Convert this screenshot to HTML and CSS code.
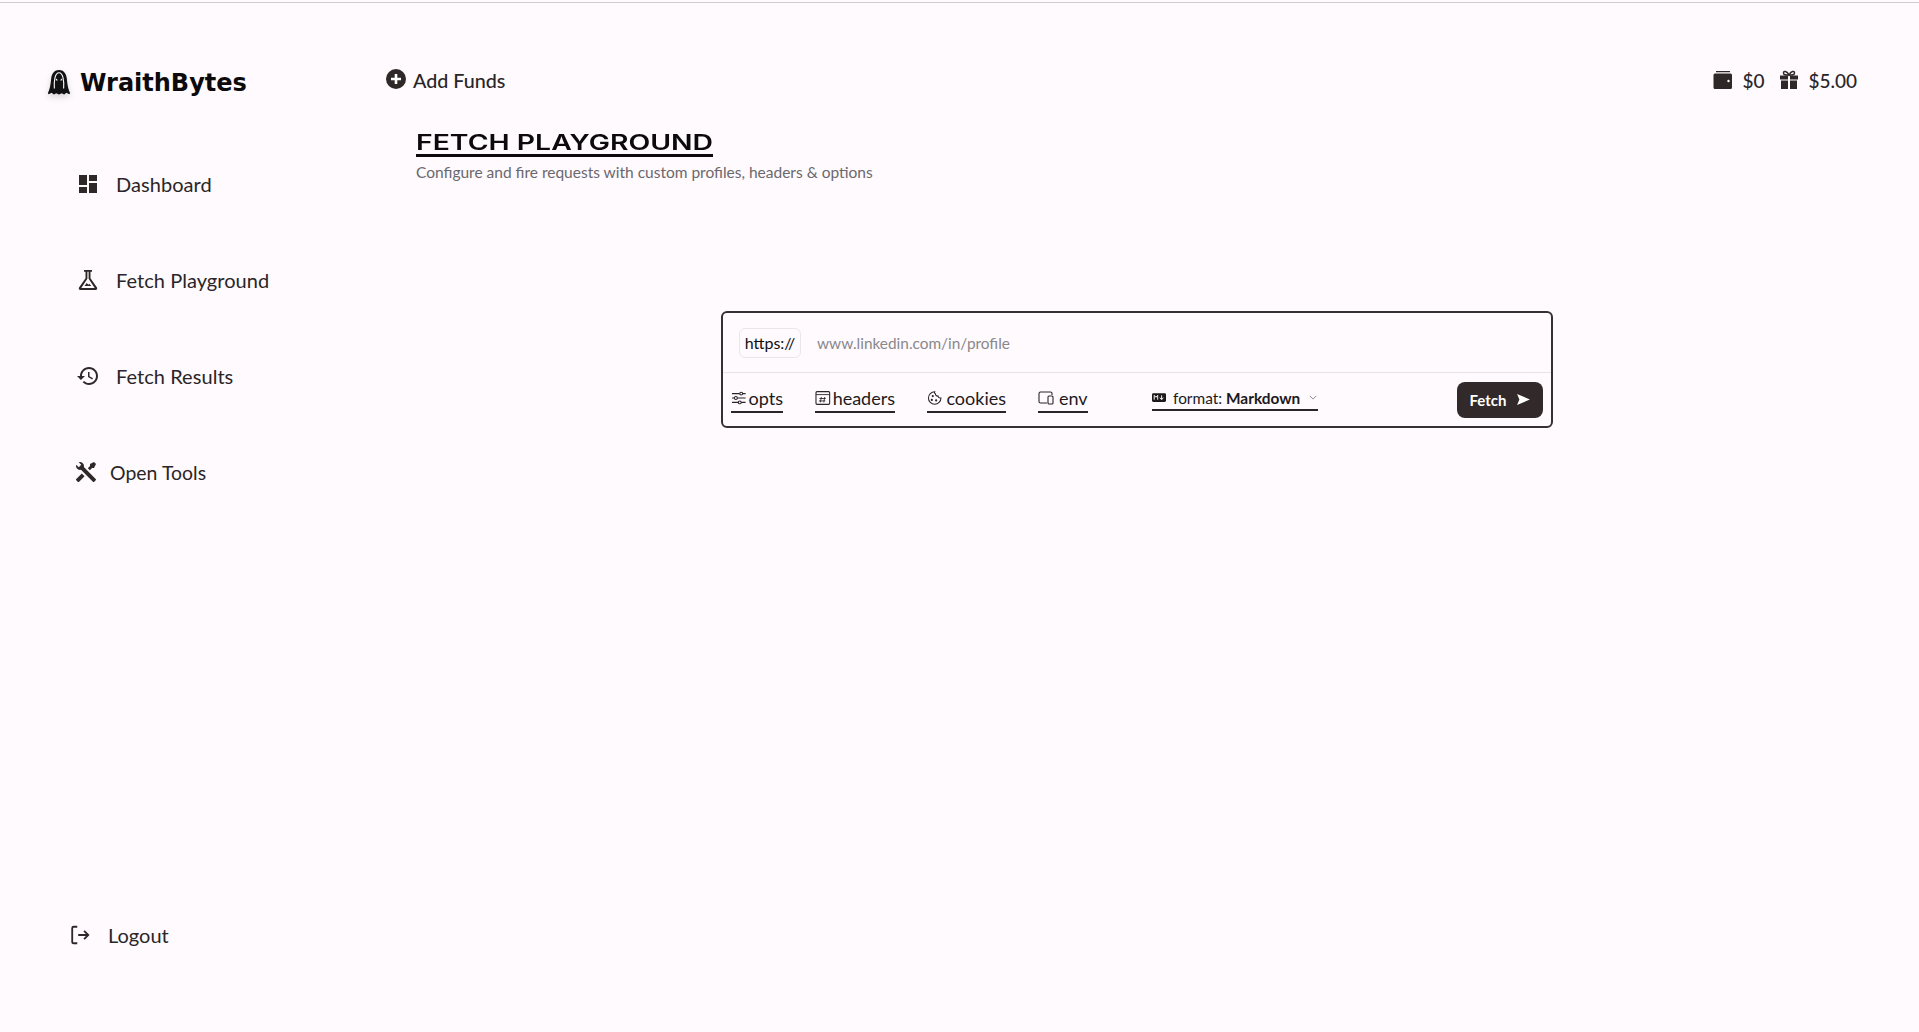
FILE: index.html
```html
<!DOCTYPE html>
<html lang="en">
<head>
    <meta charset="UTF-8">
    <title>Fetch Playground - WraithBytes</title>
    <link rel="stylesheet" href="styles.css">
</head>
<body>
    <div class="topline"></div>
    <div class="app">
        <aside class="sidebar">
            <div class="logo">
                <svg class="logo-icon" viewBox="0 0 24 28" width="24" height="26">
                    <path fill="#111" d="M12 0C6 0 4 5 3.500 10C3 16 2 21 0 25L1 26L4 24.500L6.500 26.500L9 25L12 26.500L15 25L17.500 26.500L20 24.500L23 26L24 25C22 21 21 16 20.500 10C20 5 18 0 12 0Z"/>
                    <path fill="none" stroke="#fefafd" stroke-width="1.200" d="M7 20C6.500 12 7.500 3 12 3C16.500 3 17.500 12 17 20"/>
                    <path fill="#fefafd" d="M8.500 9L11 11L8.800 11.200ZM15.500 9L13 11L15.200 11.200Z"/>
                </svg>
                <span class="logo-text">WraithBytes</span>
            </div>
            <nav class="nav">
                <a class="nav-item">
                    <svg class="nav-icon" viewBox="0 0 24 24"><path d="M3 13h8V3H3v10zm0 8h8v-6H3v6zm10 0h8V11h-8v10zm0-18v6h8V3h-8z"/></svg>
                    <span>Dashboard</span>
                </a>
                <a class="nav-item">
                    <svg class="nav-icon" viewBox="0 0 24 24"><path d="M8 2h8v1.800h-1.500v6.400L21 19.600A1.600 1.600 0 0 1 19.700 22H4.300A1.600 1.600 0 0 1 3 19.600L9.500 10.200V3.800H8zM11.400 3.800v7L5.300 20.100h13.400L12.600 10.800v-7z"/><path d="M8.500 18l2.200-3 1.600 1.800 1-1 2 2.200z"/></svg>
                    <span>Fetch Playground</span>
                </a>
                <a class="nav-item">
                    <svg class="nav-icon" viewBox="0 0 24 24"><path d="M13 3c-4.970 0-9 4.030-9 9H1l3.890 3.890.070.140L9 12H6c0-3.870 3.130-7 7-7s7 3.130 7 7-3.130 7-7 7c-1.930 0-3.680-.790-4.940-2.060l-1.420 1.420C8.270 19.990 10.510 21 13 21c4.970 0 9-4.030 9-9s-4.030-9-9-9zm-1 5v5l4.280 2.540.720-1.210-3.500-2.080V8H12z"/></svg>
                    <span>Fetch Results</span>
                </a>
                <a class="nav-item nav-tools">
                    <svg class="nav-icon" viewBox="0 0 24 24"><path d="M21.710 20.290L20.290 21.710A1 1 0 0 1 18.880 21.710L7 9.850A3.810 3.810 0 0 1 6 10A4 4 0 0 1 2.220 4.700L4.760 7.240L5.290 6.710L6.710 5.290L7.240 4.760L4.700 2.220A4 4 0 0 1 10 6A3.810 3.810 0 0 1 9.850 7L21.710 18.880A1 1 0 0 1 21.710 20.290M2.290 18.880A1 1 0 0 0 2.290 20.290L3.710 21.710A1 1 0 0 0 5.120 21.710L10.590 16.250L7.760 13.410M20 2L16 4V6L13.830 8.170L15.830 10.170L18 8H20L22 4Z"/></svg>
                    <span>Open Tools</span>
                </a>
            </nav>
            <a class="logout">
                <svg class="logout-icon" viewBox="0 0 24 24"><path d="M9 3H5a1.500 1.500 0 0 0-1.500 1.500v15A1.500 1.500 0 0 0 5 21h4M10 12h11M16.500 7.500L21 12l-4.500 4.500"/></svg>
                <span>Logout</span>
            </a>
        </aside>

        <main class="main">
            <div class="topbar">
                <a class="add-funds">
                    <svg class="add-icon" viewBox="0 0 20 20"><circle cx="10" cy="10" r="10" fill="#2f2829"/><path d="M10 5v10M5 10h10" stroke="#fff" stroke-width="2.600"/></svg>
                    <span>Add Funds</span>
                </a>
                <div class="balance">
                    <svg class="bal-icon" viewBox="0 0 20 20"><path fill="#2f2829" d="M3 1h14v1.200H3zM2 3.500h15.500A1.500 1.500 0 0 1 19 5v12.500a1.500 1.500 0 0 1-1.500 1.500h-15A1.500 1.500 0 0 1 .5 17.500V5A1.500 1.500 0 0 1 2 3.500z"/><circle cx="15.500" cy="11" r="1.200" fill="#fff"/></svg>
                    <span class="bal-val">$0</span>
                    <svg class="bal-icon" viewBox="0 0 20 20"><path fill="#2f2829" d="M1 5.500h18v4H1zM2 10.500h16V19H2z"/><path fill="#fff" d="M9 5.500h2V19H9z"/><path fill="none" stroke="#2f2829" stroke-width="1.500" d="M10 5C8 1 4.500 .5 4.500 3S8 5 10 5C12 5 15.500 5.500 15.500 3S12 1 10 5Z"/></svg>
                    <span class="bal-val">$5.00</span>
                </div>
            </div>

            <div class="page-head">
                <h1 class="page-title">FETCH PLAYGROUND</h1>
                <p class="page-sub">Configure and fire requests with custom profiles, headers &amp; options</p>
            </div>

            <section class="card">
                <div class="url-row">
                    <span class="scheme">https://</span>
                    <span class="url-hint">www.linkedin.com/in/profile</span>
                </div>
                <div class="opt-row">
                    <a class="tab tab-opts">
                        <svg class="tab-icon" viewBox="0 0 16 16"><path d="M1 3.500h14M1 8h14M1 12.500h14"/><circle cx="10.500" cy="3.500" r="1.500" fill="#fefafd"/><circle cx="5" cy="8" r="1.500" fill="#fefafd"/><circle cx="9" cy="12.500" r="1.500" fill="#fefafd"/></svg>
                        <span>opts</span>
                    </a>
                    <a class="tab tab-headers">
                        <svg class="tab-icon" viewBox="0 0 16 16"><rect x="1" y="1.500" width="14" height="13" rx="1"/><path d="M1 4.500h14M6.500 7l-1 5.500M10 7l-1 5.500M4.500 8.500h6.500M4 11h6.500" stroke-width=".9"/></svg>
                        <span>headers</span>
                    </a>
                    <a class="tab tab-cookies">
                        <svg class="tab-icon" viewBox="0 0 16 16"><path d="M8 1.500a6.500 6.500 0 1 0 6.500 6.500c-1.500.2-2.800-.6-3-2-1.500.2-3-1-2.800-2.500C7.700 3.200 7.600 2.300 8 1.500z"/><circle cx="6" cy="6" r=".6"/><circle cx="5" cy="10" r=".6"/><circle cx="9.500" cy="10.500" r=".6"/></svg>
                        <span>cookies</span>
                    </a>
                    <a class="tab tab-env">
                        <svg class="tab-icon" viewBox="0 0 16 16"><path d="M9 13H2.500A1.500 1.500 0 0 1 1 11.500v-8A1.500 1.500 0 0 1 2.500 2h10A1.500 1.500 0 0 1 14 3.500V5"/><rect x="10" y="6" width="5" height="8" rx="1"/></svg>
                        <span>env</span>
                    </a>
                    <a class="format">
                        <svg class="md-icon" viewBox="0 0 16 10"><rect width="16" height="10" rx="1.500" fill="#1c1819"/><path d="M2.500 7.500v-5l2 2.200 2-2.200v5M11 2.500v4.500M9 5.200L11 7.500l2-2.300" fill="none" stroke="#fff" stroke-width="1.100"/></svg>
                        <span class="format-label">format: <b>Markdown</b></span>
                        <svg class="chev" viewBox="0 0 10 6"><path d="M1 1l4 4 4-4"/></svg>
                    </a>
                    <button class="fetch-btn">
                        <span>Fetch</span>
                        <svg class="send" viewBox="0 0 14 12"><path d="M0 0L14 6L0 12L2.500 6Z"/></svg>
                    </button>
                </div>
            </section>
        </main>
    </div>
</body>
</html>
```

FILE: styles.css
```css
* {
    box-sizing: border-box;
}
body {
    margin: 0;
    padding: 0;
    height: 1032px;
    overflow: hidden;
    background-color: #fefafd;
    color: #2a2528;
    font-family: Lato, "Liberation Sans", sans-serif;
}
.topline {
    height: 3px;
    border-top: 1px solid #fefafd;
    border-bottom: 1px solid #cfcdd0;
}
.app {
    display: flex;
    height: 1029px;
}
.sidebar {
    width: 355px;
    display: flex;
    flex-direction: column;
    flex-shrink: 0;
}
.logo {
    display: flex;
    align-items: center;
    gap: 9px;
    margin-top: 66px;
    padding-left: 47px;
    height: 28px;
}
.logo-icon {
    filter: drop-shadow(0 3px 3px rgba(0,0,0,0.15));
}
.logo-text {
    font-family: "DejaVu Sans", sans-serif;
    font-weight: bold;
    font-size: 24px;
    color: #0c0a0c;
}
.nav {
    display: flex;
    flex-direction: column;
    gap: 72px;
    margin-top: 75px;
    padding-left: 76px;
}
.nav-item {
    display: flex;
    align-items: center;
    gap: 16px;
    height: 24px;
    font-size: 20px;
    letter-spacing: 0.05px;
}
.nav-icon {
    width: 24px;
    height: 24px;
    fill: #2f2829;
    flex-shrink: 0;
}
.nav-tools {
    gap: 12px;
    margin-left: -2px;
    font-size: 19.400px;
}
.logout {
    display: flex;
    align-items: center;
    gap: 17px;
    margin-top: auto;
    margin-bottom: 85px;
    padding-left: 69px;
    font-size: 20px;
    height: 24px;
}
.logout-icon {
    width: 22px;
    height: 22px;
    fill: none;
    stroke: #2f2829;
    stroke-width: 2;
}
.main {
    flex: 1;
    display: flex;
    flex-direction: column;
}
.topbar {
    display: flex;
    justify-content: space-between;
    align-items: center;
    margin-top: 65px;
    height: 24px;
    padding-left: 31px;
    padding-right: 62px;
}
.add-funds {
    display: flex;
    align-items: center;
    gap: 7px;
    font-size: 19.700px;
    font-weight: 500;
}
.add-icon {
    width: 20px;
    height: 20px;
    margin-top: -2px;
}
.balance {
    display: flex;
    align-items: center;
    font-size: 19px;
    font-weight: 500;
}
.bal-icon {
    width: 20px;
    height: 20px;
    margin-right: 9px;
}
.bal-val {
    margin-right: 15px;
}
.bal-val:last-child {
    margin-right: 0;
}
.page-head {
    margin-top: 40px;
    padding-left: 61px;
}
.page-title {
    display: inline-block;
    margin: 0;
    font-family: Inter, sans-serif;
    font-weight: 600;
    font-size: 21px;
    line-height: 22px;
    color: #0c0a0c;
    border-bottom: 3px solid #0c0a0c;
    transform: scaleX(1.350);
    transform-origin: left;
}
.page-sub {
    margin: 5px 0 0;
    font-size: 15.500px;
    line-height: 20px;
    color: #6b686c;
}
.card {
    align-self: center;
    width: 832px;
    height: 117px;
    margin-top: 129px;
    border: 2px solid #373032;
    border-radius: 6px;
    display: flex;
    flex-direction: column;
}
.url-row {
    display: flex;
    align-items: center;
    gap: 16px;
    height: 60px;
    padding-left: 16px;
    border-bottom: 1px solid #e6e4e6;
}
.scheme {
    height: 30px;
    width: 62px;
    display: flex;
    align-items: center;
    justify-content: center;
    border: 1px solid #e9e7e9;
    border-radius: 6px;
    font-size: 16px;
    color: #111;
}
.url-hint {
    font-size: 15.400px;
    color: #8a888c;
}
.opt-row {
    flex: 1;
    display: flex;
    align-items: center;
    padding-left: 8px;
    padding-right: 8px;
}
.tab {
    display: flex;
    align-items: center;
    gap: 2px;
    height: 27px;
    margin-top: -1px;
    margin-right: 32px;
    border-bottom: 2px solid #2a2528;
    font-size: 18px;
    color: #1d191c;
}
.tab-icon {
    width: 16px;
    height: 16px;
    fill: none;
    stroke: #2a2528;
    stroke-width: 1.100;
}
.tab-opts {
    width: 52px;
}
.tab-headers {
    width: 80px;
}
.tab-cookies {
    width: 79px;
    gap: 4px;
}
.tab-env {
    width: 50px;
    margin-right: 0;
    gap: 5px;
}
.format {
    display: flex;
    align-items: center;
    width: 166px;
    height: 25px;
    padding-top: 1px;
    margin-left: 64px;
    margin-top: -3px;
    border-bottom: 2px solid #2a2528;
    font-size: 15.400px;
    color: #1d191c;
}
.md-icon {
    width: 14px;
    height: 9px;
    margin-right: 7px;
}
.format-label b {
    font-weight: 700;
}
.chev {
    width: 8px;
    height: 5px;
    margin-left: 9px;
    fill: none;
    stroke: #8a888c;
    stroke-width: 1.200;
}
.fetch-btn {
    margin-left: auto;
    width: 86px;
    height: 36px;
    display: flex;
    align-items: center;
    justify-content: center;
    gap: 11px;
    background-color: #32292a;
    color: #fff;
    border: none;
    border-radius: 8px;
    font-family: inherit;
    font-size: 15px;
    font-weight: 700;
}
.send {
    width: 13px;
    height: 11px;
    fill: #fff;
}
```
